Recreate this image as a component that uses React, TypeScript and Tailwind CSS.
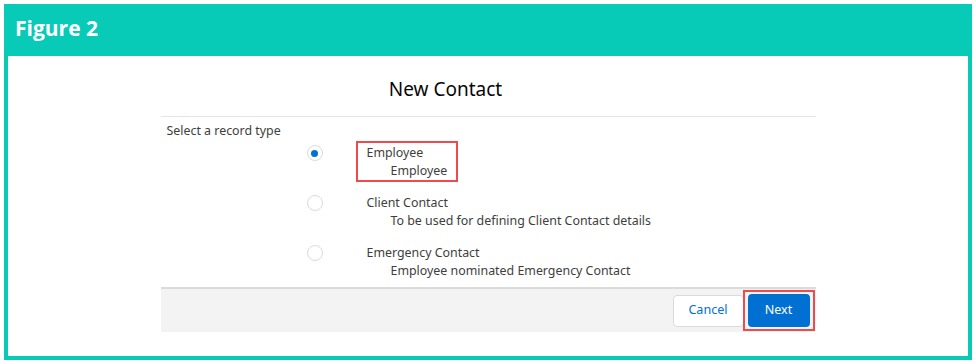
import React from "react";

function Radio({ checked }: { checked?: boolean }) {
  return (
    <div className="w-[16px] h-[16px] rounded-full border border-[#dddbda] bg-white flex items-center justify-center shrink-0">
      {checked && <div className="w-[7px] h-[7px] rounded-full bg-[#0070d2]" />}
    </div>
  );
}

function Option({
  checked,
  title,
  sub,
  highlight,
}: {
  checked?: boolean;
  title: string;
  sub: string;
  highlight?: boolean;
}) {
  return (
    <div className="flex items-start">
      <div className="ml-[146px] mt-[1px]">
        <Radio checked={checked} />
      </div>
      <div className="relative text-[12.4px] leading-[18px] text-[#3e3e3c] ml-[44px]">
        {highlight && (
          <div className="absolute -left-[11px] -right-[11px] -top-[3px] -bottom-[2px] border-2 border-[#ef4a4e]" />
        )}
        <div>{title}</div>
        <div className="pl-[24px]">{sub}</div>
      </div>
    </div>
  );
}

export default function App() {
  return (
    <div
      className="w-[976px] h-[364px] bg-white p-[4px]"
      style={{ fontFamily: '"Noto Sans", "Open Sans", sans-serif' }}
    >
      <div className="w-full h-full bg-[#08cbb7] flex flex-col">
        <div className="h-[52px] flex items-center pl-[11px] pb-[2px]">
          <span
            className="text-white text-[21px] font-bold"
            style={{ fontFamily: '"Open Sans", sans-serif' }}
          >
            Figure 2
          </span>
        </div>
        <div className="flex-1 mx-[4px] mb-[4px] bg-white flex justify-center">
          <div className="w-[655px] flex flex-col">
            <div className="h-[61px] flex items-center justify-center border-b border-[#e5e5e5] pt-[6px]">
              <span className="text-[19px] text-[#080707] ml-[-85px]">New Contact</span>
            </div>
            <div className="h-[170px] pt-[5px]">
              <div className="pl-[6px] text-[12.4px] leading-[18px] text-[#3e3e3c]">
                Select a record type
              </div>
              <div className="mt-[4px] flex flex-col gap-[14px]">
                <Option checked title="Employee" sub="Employee" highlight />
                <Option title="Client Contact" sub="To be used for defining Client Contact details" />
                <Option title="Emergency Contact" sub="Employee nominated Emergency Contact" />
              </div>
            </div>
            <div className="h-[45px] bg-[#f3f3f3] border-t-2 border-[#dddbda] flex items-center justify-end pr-[6px] gap-[4px]">
              <button className="h-[32px] w-[71px] rounded-[4px] border border-[#dddbda] bg-white text-[#0070d2] text-[12.6px]">
                Cancel
              </button>
              <div className="relative">
                <div className="absolute -left-[5px] -right-[5px] -top-[4px] -bottom-[4px] border-2 border-[#ef4a4e]" />
                <button className="relative h-[33px] w-[62px] rounded-[4px] bg-[#0070d2] text-white text-[12.6px]">
                  Next
                </button>
              </div>
            </div>
          </div>
        </div>
      </div>
    </div>
  );
}
